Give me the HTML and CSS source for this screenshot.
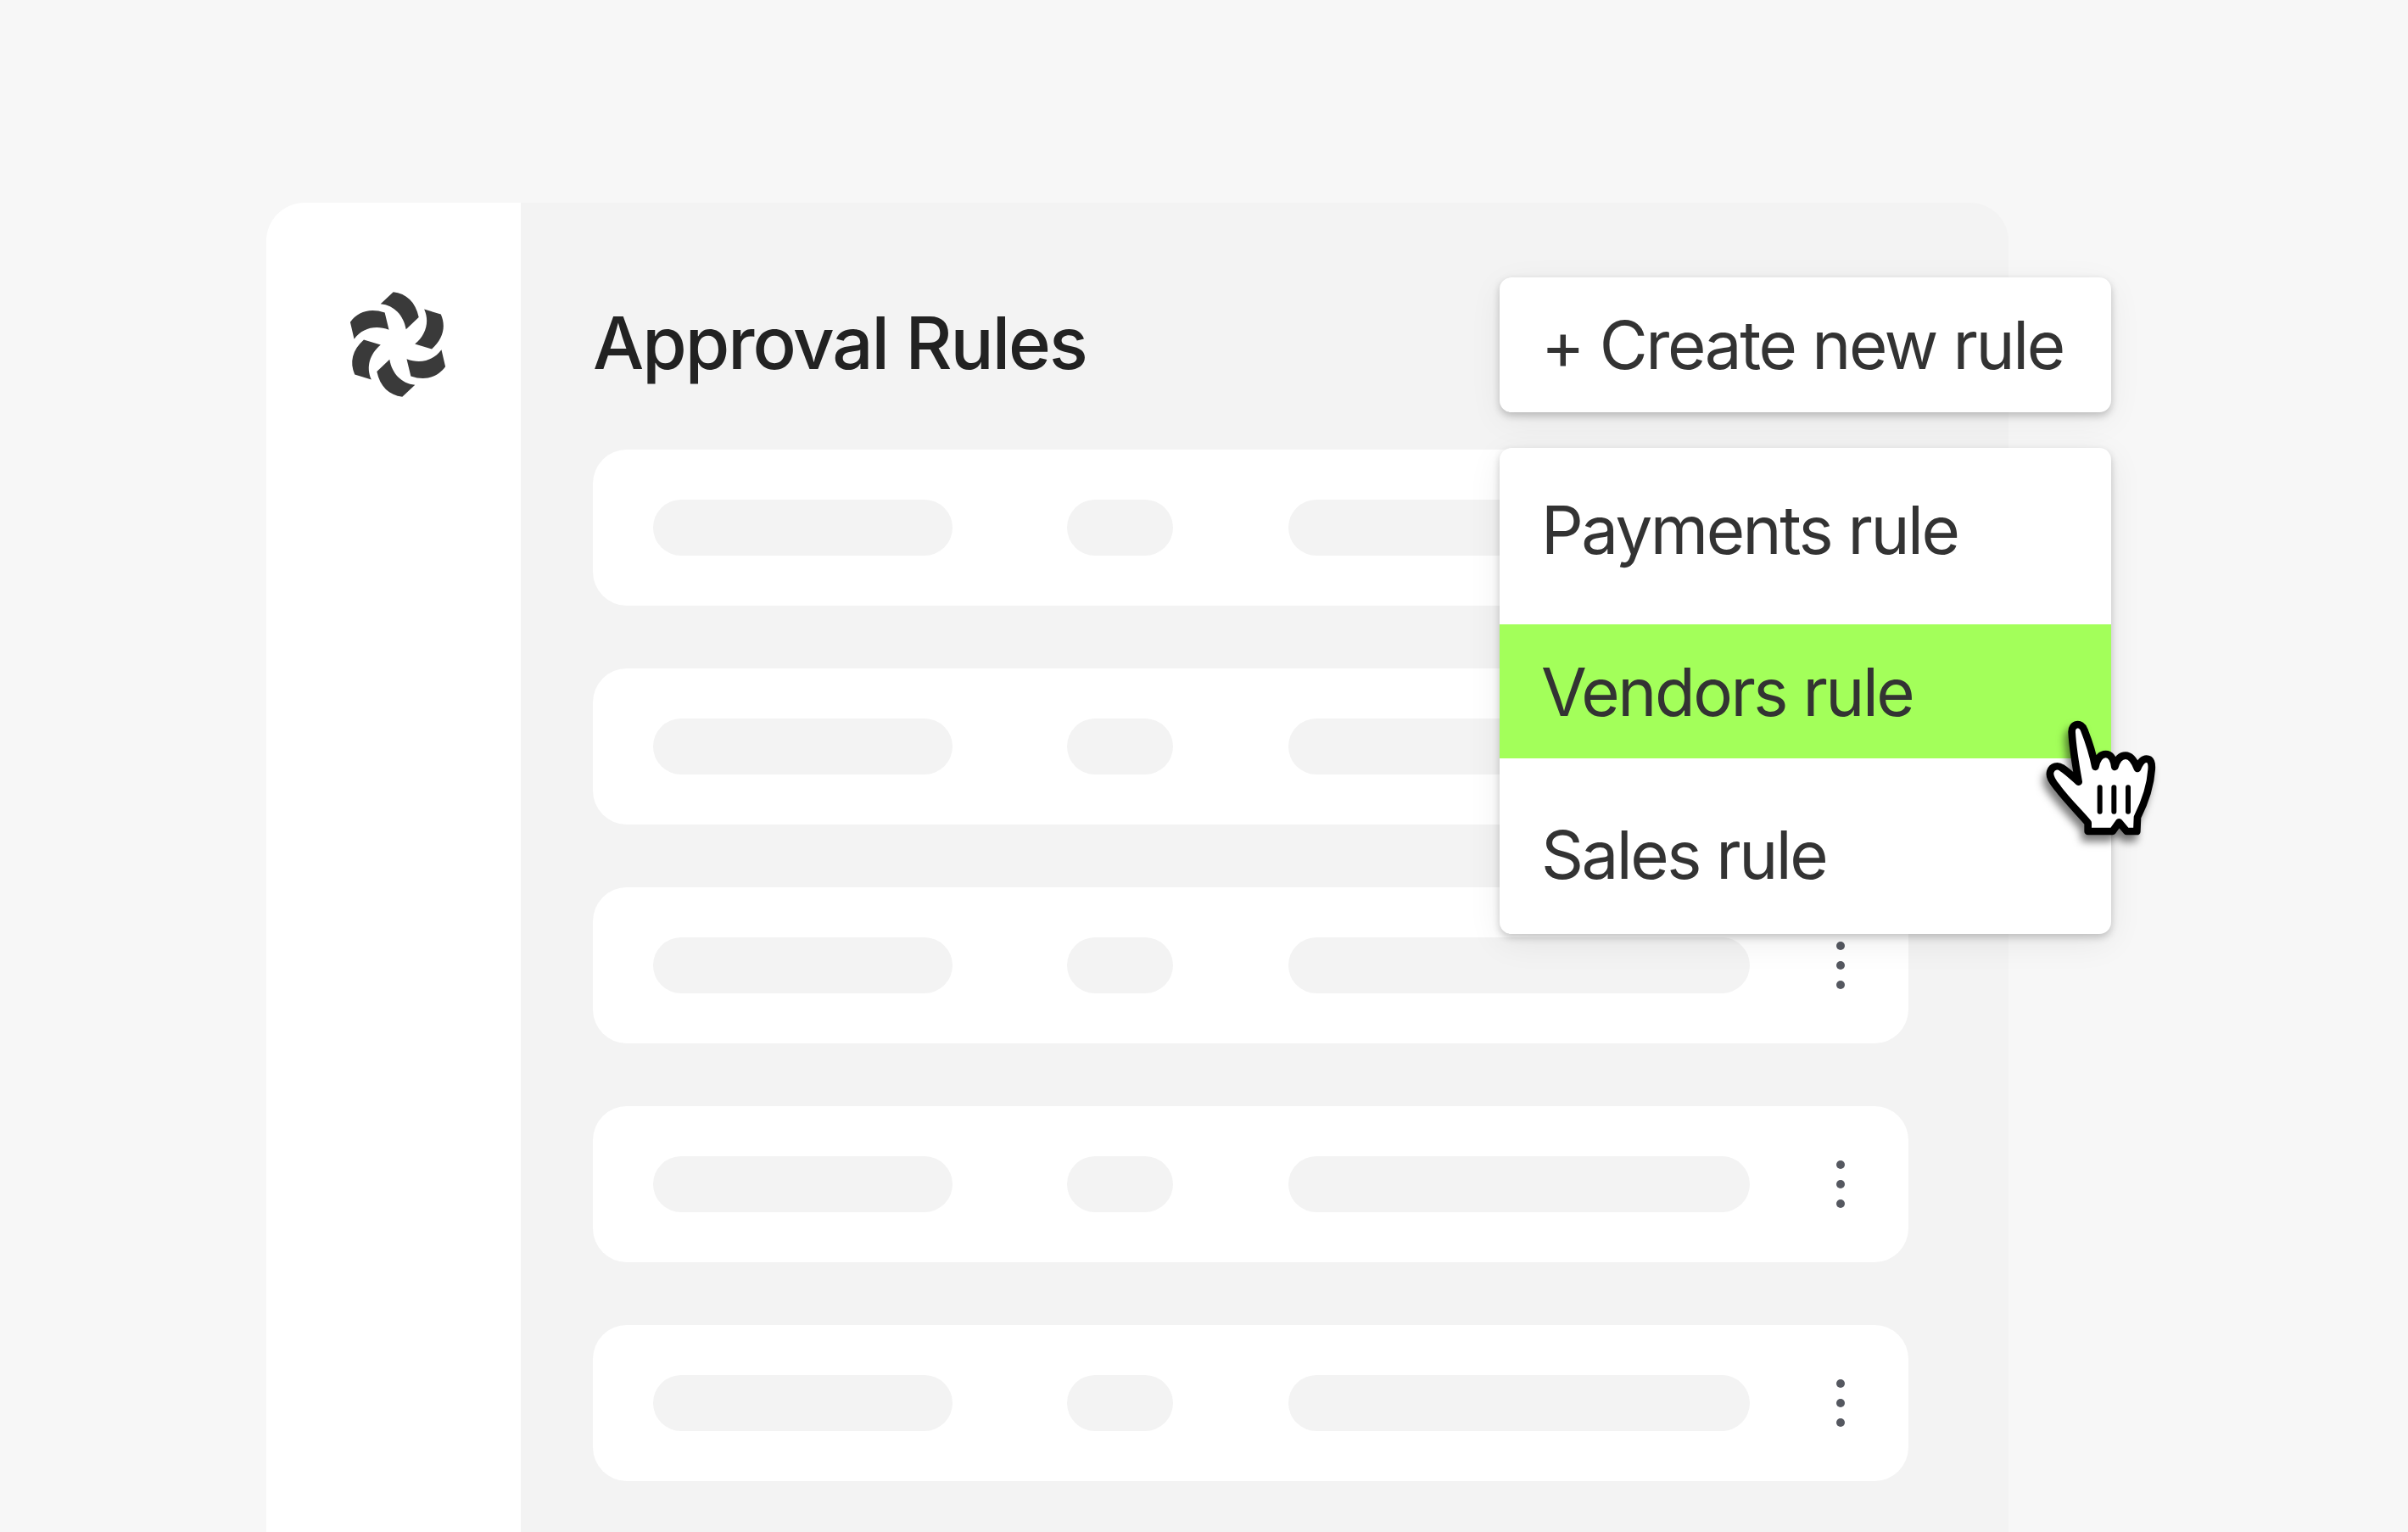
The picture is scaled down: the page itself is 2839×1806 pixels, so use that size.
FILE: index.html
```html
<!DOCTYPE html>
<html lang="en">
<head>
<meta charset="utf-8">
<title>Approval Rules</title>
<link rel="stylesheet" href="styles.css">
</head>
<body>
<div class="frame">
  <aside class="sidebar">
    <svg class="logo" viewBox="-64 -64 128 128" aria-hidden="true">
      <defs><path id="petal" d="M-5.3 -61.7 L-20.3 -47.7 C-4 -46 7 -34 9.7 -17.7 L24.7 -32 C21 -50 10 -60 -5.3 -61.7 Z"/></defs>
      <use href="#petal"/>
      <use href="#petal" transform="rotate(60)"/>
      <use href="#petal" transform="rotate(120)"/>
      <use href="#petal" transform="rotate(180)"/>
      <use href="#petal" transform="rotate(240)"/>
      <use href="#petal" transform="rotate(300)"/>
    </svg>
  </aside>
  <main class="panel">
    <h1 class="title">Approval Rules</h1>
    <div class="rows">
      <div class="row"><span class="pill p1"></span><span class="pill p2"></span><span class="pill p3"></span><span class="dots"><i></i><i></i><i></i></span></div>
      <div class="row"><span class="pill p1"></span><span class="pill p2"></span><span class="pill p3"></span><span class="dots"><i></i><i></i><i></i></span></div>
      <div class="row"><span class="pill p1"></span><span class="pill p2"></span><span class="pill p3"></span><span class="dots"><i></i><i></i><i></i></span></div>
      <div class="row"><span class="pill p1"></span><span class="pill p2"></span><span class="pill p3"></span><span class="dots"><i></i><i></i><i></i></span></div>
      <div class="row"><span class="pill p1"></span><span class="pill p2"></span><span class="pill p3"></span><span class="dots"><i></i><i></i><i></i></span></div>
    </div>
  </main>
  <div class="actions">
    <button class="create">+ Create new rule</button>
    <div class="menu">
      <div class="item first">Payments rule</div>
      <div class="item active">Vendors rule</div>
      <div class="item last">Sales rule</div>
    </div>
  </div>
  <svg class="hand" viewBox="0 0 630 540" aria-hidden="true">
    <path class="hand-body" d="M272 305 C262 250 250 170 248 130 C246 98 282 92 292 122 C305 155 322 205 331 252 C338 220 352 207 368 207 C386 207 396 225 400 252 C408 225 420 212 438 212 C456 212 470 232 480 258 C488 238 498 224 512 224 C528 224 532 240 530 262 C526 320 510 370 480 430 L478 480 L442 480 L415 448 L392 480 L305 480 L305 450 C280 420 230 370 200 330 C185 310 165 290 172 268 C178 250 198 245 212 255 C235 270 255 290 272 305 Z"/>
    <path class="hand-line" d="M347 325 V410 M397 325 V410 M447 325 V410"/>
  </svg>
</div>
</body>
</html>
```
FILE: styles.css
```css
* { box-sizing: border-box; }
html, body { margin: 0; height: 100%; }
body {
  background: #f7f7f7;
  font-family: Inter, "Liberation Sans", sans-serif;
  overflow: hidden;
  padding: 239px 0 0 314px;
}
.frame {
  position: relative;
  display: flex;
  width: 2054px;
  height: 1567px;
}
.sidebar {
  width: 300px;
  flex: none;
  background: #fff;
  border-radius: 45px 0 0 0;
  padding: 103px 0 0 91px;
}
.logo { display: block; width: 128px; height: 128px; fill: #3a3a3a; }
.panel {
  flex: 1;
  background: #f3f3f3;
  border-radius: 0 45px 0 0;
  padding: 0 118px 0 85px;
}
.title {
  margin: 123px 0 0;
  font-size: 85px;
  line-height: 86px;
  font-weight: 500;
  color: #222;
  letter-spacing: -2.05px;
}
.rows { display: flex; flex-direction: column; gap: 74px; margin-top: 82px; }
.row {
  height: 184px;
  background: #fff;
  border-radius: 40px;
  display: flex;
  align-items: center;
  padding-left: 71px;
}
.pill { height: 66px; border-radius: 33px; background: #f3f3f3; flex: none; }
.p1 { width: 353px; }
.p2 { width: 125px; margin-left: 135px; }
.p3 { width: 544px; margin-left: 136px; }
.dots { display: flex; flex-direction: column; gap: 13px; margin-left: 102px; }
.dots i { display: block; width: 10px; height: 10px; border-radius: 50%; background: #555860; }
.actions {
  position: absolute;
  left: 1454px;
  top: 88px;
  width: 721px;
  display: flex;
  flex-direction: column;
  gap: 42px;
}
.create {
  height: 159px;
  border: 0;
  border-radius: 14px;
  background: #fff;
  color: #333;
  font: 400 78px/1 Inter, "Liberation Sans", sans-serif;
  text-align: left;
  padding: 0 0 0 49px;
  box-shadow: 0 4px 10px rgba(0,0,0,.22), 0 10px 40px rgba(0,0,0,.06);
  letter-spacing: -2.4px;
}
.menu {
  border-radius: 14px;
  background: #fff;
  overflow: hidden;
  box-shadow: 0 4px 10px rgba(0,0,0,.2), 0 10px 40px rgba(0,0,0,.07);
}
.item {
  display: flex;
  align-items: center;
  padding-left: 49px;
  font-size: 78px;
  color: #333;
  letter-spacing: -2.5px;
}
.first { height: 208px; padding-bottom: 16px; }
.active { height: 158px; background: #a3ff5a; }
.last { height: 207px; padding-top: 20px; }
.hand {
  position: absolute;
  left: 2046px;
  top: 581px;
  width: 210px;
  height: 180px;
  filter: drop-shadow(-4px 8px 5px rgba(0,0,0,.5));
}
.hand-body { fill: #fff; stroke: #000; stroke-width: 26; stroke-linejoin: round; }
.hand-line { fill: none; stroke: #000; stroke-width: 18; stroke-linecap: round; }
```
